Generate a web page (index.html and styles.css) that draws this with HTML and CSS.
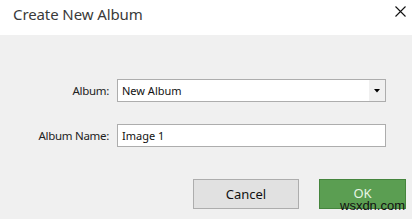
FILE: index.html
```html
<!DOCTYPE html>
<html>
<head>
<meta charset="utf-8">
<link rel="stylesheet" href="styles.css">
</head>
<body>
<div class="dialog">
  <div class="titlebar">
    <span class="title">Create New Album</span>
    <svg class="close" width="11" height="11" viewBox="0 0 11 11"><path d="M0.5 0.5 L10.5 10.5 M10.5 0.5 L0.5 10.5" stroke="#111" stroke-width="1.1" fill="none"/></svg>
  </div>
  <div class="content">
    <div class="form">
      <label class="label">Album:</label>
      <div class="field select">
        <span class="value">New Album</span>
        <span class="drop"><svg width="6" height="4" viewBox="0 0 6 4"><path d="M0 0 H6 L3 3.5 Z" fill="#000"/></svg></span>
      </div>
      <label class="label">Album Name:</label>
      <div class="field input"><span class="value">Image 1</span></div>
    </div>
    <div class="buttons">
      <div class="btn cancel">Cancel</div>
      <div class="btn ok">OK</div>
    </div>
  </div>
  <div class="watermark">wsxdn.com</div>
</div>
</body>
</html>
```
FILE: styles.css
```css
html, body {
  margin: 0;
  padding: 0;
}
body {
  width: 412px;
  height: 219px;
  overflow: hidden;
  background: #f0f0f0;
  font-family: "Noto Sans", "Open Sans", sans-serif;
}
.dialog {
  position: relative;
  width: 412px;
  height: 219px;
  background: #f0f0f0;
}
.titlebar {
  height: 35px;
  background: #fff;
  display: flex;
  align-items: flex-start;
  justify-content: space-between;
  box-sizing: border-box;
  padding: 4px 6px 0 13px;
}
.title {
  font-size: 15px;
  color: #3a3a3a;
  line-height: 20px;
  letter-spacing: -0.1px;
}
.close {
  margin-top: 2px;
}
.content {
  padding-top: 44px;
}
.form {
  display: grid;
  grid-template-columns: 109px 269px;
  column-gap: 8px;
  row-gap: 22px;
  align-items: center;
}
.label {
  text-align: right;
  font-size: 11.5px;
  letter-spacing: -0.3px;
  color: #222;
}
.field {
  height: 23px;
  box-sizing: border-box;
  border: 1px solid #adadad;
  background: #fff;
  display: flex;
  align-items: center;
  font-size: 11px;
  color: #111;
}
.value {
  padding-left: 4px;
  flex: 1;
}
.drop {
  width: 16px;
  height: 21px;
  background: #f0f0f0;
  display: flex;
  align-items: center;
  justify-content: center;
}
.buttons {
  display: flex;
  justify-content: flex-end;
  gap: 20px;
  padding: 32px 6px 0 0;
}
.btn {
  height: 30px;
  box-sizing: border-box;
  display: flex;
  align-items: center;
  justify-content: center;
  font-size: 13px;
}
.cancel {
  width: 106px;
  background: #e1e1e1;
  border: 1px solid #adadad;
  color: #111;
}
.ok {
  width: 87px;
  background: #5b9e52;
  border: 1px solid #45853d;
  color: #e8f5e5;
  padding-bottom: 3px;
}
.watermark {
  position: absolute;
  left: 340px;
  top: 198px;
  font-size: 13px;
  line-height: 15px;
  color: #111;
  font-family: "Liberation Sans", sans-serif;
}
```
